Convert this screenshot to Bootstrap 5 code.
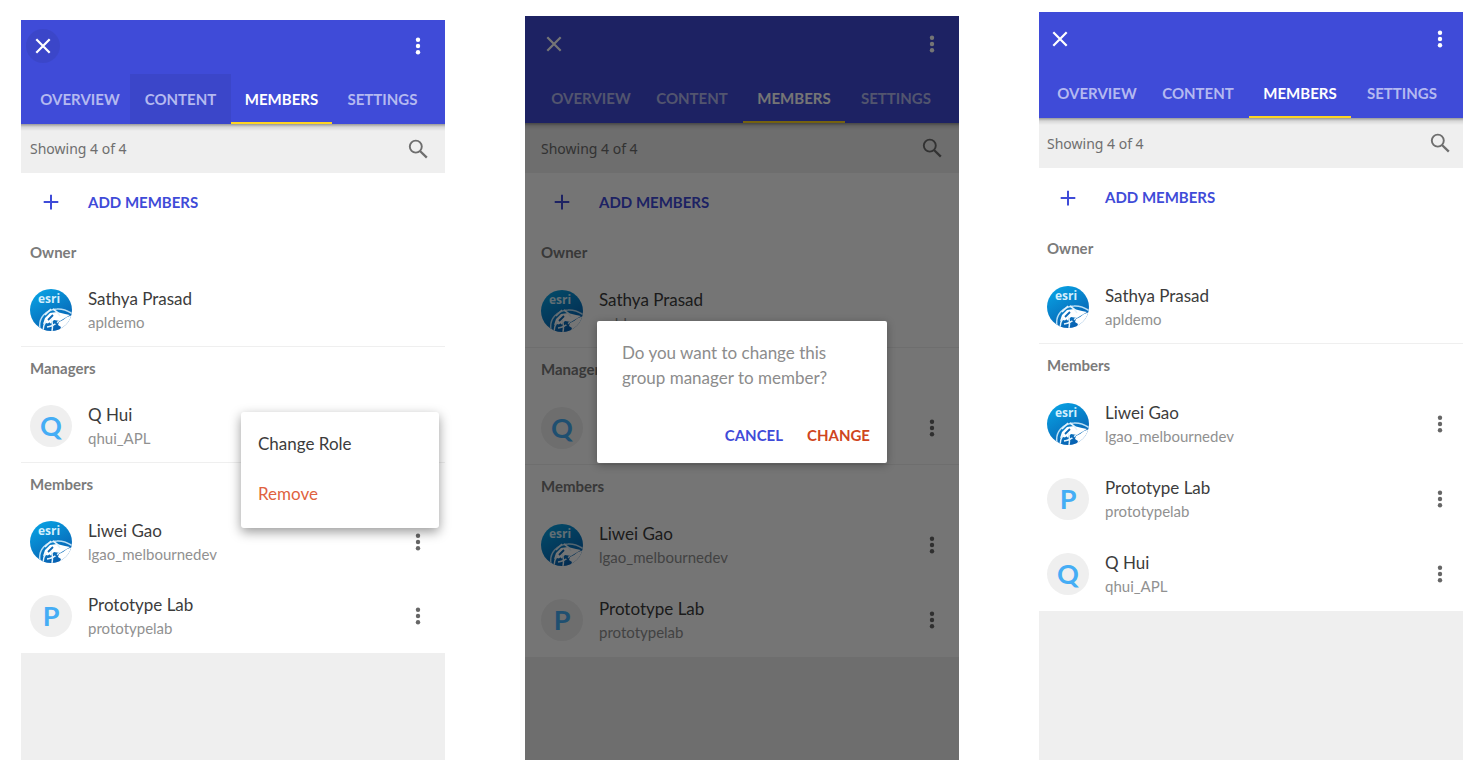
<!DOCTYPE html>
<html lang="en">
<head>
<meta charset="utf-8">
<meta name="viewport" content="width=device-width, initial-scale=1">
<title>Group members</title>
<link href="https://cdn.jsdelivr.net/npm/bootstrap@5.3.0/dist/css/bootstrap.min.css" rel="stylesheet">
<style>
  body { font-family: Lato, sans-serif; background: #fff; color: #3c3c3c; }
  .screens { display: grid; grid-template-columns: 424fr 434fr 424fr; column-gap: 80px; padding: 0 15px 16px 21px; }
  .screen { --gutter: 9px; --head: 104px; --sub: 49px; --add: 58px; --line: 74px; --end: 15px; --tab: 101px; background: #efefef; }
  .screen-menu { margin-top: 20px; }
  .screen-dialog { margin-top: 16px; --gutter: 16px; --head: 107px; --sub: 50px; --line: 75px; --tab: 102px; }
  .screen-result { margin-top: 12px; --gutter: 8px; --head: 106px; --sub: 50px; --add: 59px; --line: 75px; --end: 11px; --tab: 102px; }
  .screen button { border: 0; background: none; padding: 0; }
  .sprite { width: 0; height: 0; }
  .icon-btn { width: 34px; height: 34px; flex: none; display: grid; place-items: center; color: inherit; }
  .icon-btn svg, .plus svg { width: 24px; height: 24px; fill: currentColor; }
  .top-area { height: var(--head); background: #3f4bd8; color: #fff; }
  .app-bar { padding: 9px calc(var(--end) - 5px) 0 calc(var(--gutter) - 4px); }
  .screen-dialog .app-bar { padding-top: 11px; }
  .screen-result .app-bar { padding-top: 10px; }
  .screen .pressed { background: rgba(40,50,120,.15); }
  .tab-strip { padding-left: calc(var(--gutter) - 4px); }
  .tab-strip a { flex: 0 0 var(--tab); height: 50px; padding-top: 2px; display: grid; place-items: center; color: #b4b9f0; font-size: 15px; font-weight: 700; text-decoration: none; border-bottom: 2px solid transparent; }
  .tab-strip a:first-child { flex-basis: 104px; padding-left: 4px; }
  .tab-strip a.active { color: #fff; border-color: #fdd423; }
  .sub-bar { height: var(--sub); padding: 0 calc(var(--end) - 5px) 0 var(--gutter); color: #6e6e6e; font: 14px "Noto Sans", sans-serif; background: linear-gradient(rgba(0,0,0,.36), rgba(0,0,0,.1) 3px, transparent 7px); }
  .add-row { height: var(--add); width: 100%; padding-left: var(--gutter) !important; color: #3f4bd8; font-size: 15px; font-weight: 700; }
  .plus { width: 42px; margin-right: 16px; display: grid; place-items: center; }
  .group + .group { border-top: 1px solid #efefef; margin-top: -1px; }
  .group h2 { height: 42px; line-height: 42px; margin: 0; padding-left: var(--gutter); font-size: 15px; font-weight: 700; color: #7b7b7b; }
  .person { height: var(--line); padding: 0 calc(var(--end) - 5px) 0 var(--gutter); position: relative; }
  .avatar { width: 42px; height: 42px; margin-right: 16px; flex: none; border-radius: 50%; }
  .letter { background: #efefef; color: #45adf5; font-size: 27px; font-weight: 700; line-height: 42px; text-align: center; }
  .esri { display: grid; overflow: hidden; background: linear-gradient(150deg, #08a8e8, #0754a8); }
  .esri > * { grid-area: 1 / 1; }
  .esri svg { width: 42px; height: 42px; }
  .esri span { padding-left: 8px; font: 700 12px/20px "Open Sans", sans-serif; color: #d3effd; }
  .who { font-size: 17px; line-height: 24px; }
  .login { font-size: 15px; line-height: 22px; color: #919191; }
  .person .icon-btn { color: #666; }
  .role-menu { display: block; position: absolute; z-index: 2; right: 6px; top: 23px; width: 198px; padding: 7px 0 9px; border: 0; border-radius: 3px; box-shadow: 0 4px 12px rgba(0,0,0,.4); }
  .screen .role-menu button { height: 50px; padding: 0 17px; font-size: 17px; color: #3c3c3c; }
  .screen .role-menu button.warn { color: #df6240; }
  .shade { position: absolute; inset: 0; z-index: 3; background: rgba(0,0,0,.54); padding-top: 7px; }
  .confirm { width: 290px; padding: 19px 17px 13px 25px; background: #fff; border-radius: 2px; box-shadow: 0 2px 8px rgba(0,0,0,.3); }
  .confirm p { margin: 0 0 32px; font-size: 17px; line-height: 25px; color: #8c8c8c; }
  .confirm button { height: 28px; font-size: 15px; font-weight: 700; color: #3f4bd8; }
  .confirm button.warn { color: #cf4520; }
</style>
</head>
<body>
<svg class="sprite position-absolute" aria-hidden="true">
  <symbol id="close" viewBox="0 0 24 24"><path d="M5.3 5.3 18.7 18.7M18.7 5.3 5.3 18.7" stroke="currentColor" stroke-width="2.2"/></symbol>
  <symbol id="dots" viewBox="0 0 24 24"><circle cx="12" cy="5.7" r="2.2"/><circle cx="12" cy="12" r="2.2"/><circle cx="12" cy="18.3" r="2.2"/></symbol>
  <symbol id="search" viewBox="0 0 24 24"><circle cx="9.8" cy="9.6" r="6" fill="none" stroke="currentColor" stroke-width="1.9"/><path d="m14 14 6.8 6.6" stroke="currentColor" stroke-width="2.3"/></symbol>
  <symbol id="plus" viewBox="0 0 24 24"><path d="M12 4.8v14.6M4.7 12h14.6" stroke="currentColor" stroke-width="2"/></symbol>
  <symbol id="globe" viewBox="0 0 42 42">
    <path d="M43 26 37 28l-4 3-4 2-1 3 3 2-2 5h14z" fill="#fff"/>
    <path d="M10 40C8 29 16 20.500 27 20q7-.5 15 4.500" fill="none" stroke="#b9ddf4" stroke-width="1.500"/>
    <path d="m13 35 2-6 5-5 7-1 8 2 5 1-5 3-5 3-6-1-4 4-4-1z" fill="#fff"/>
    <path d="M13 42c0-5 1-7 3-10M21 30c2 4 2 7 1 12M17 38q7-1 12-6M23 20q5 3 7 7M15 26q4-4 6-6" fill="none" stroke="#e4f3fc" stroke-width="1.500"/>
    <path d="m18 31 5-5M18 36l2-2M24 38l3-2M25 33l2 2" stroke="#0b68b5" stroke-width="1.800"/>
  </symbol>
</svg>

<main class="screens min-vh-100">
  <section class="screen screen-menu">
    <header class="top-area d-flex flex-column justify-content-between">
      <div class="app-bar d-flex justify-content-between">
        <button class="icon-btn rounded-circle pressed" aria-label="Close"><svg><use href="#close"/></svg></button>
        <button class="icon-btn" aria-label="More"><svg><use href="#dots"/></svg></button>
      </div>
      <nav class="tab-strip d-flex"><a href="#">OVERVIEW</a><a href="#" class="pressed">CONTENT</a><a href="#" class="active">MEMBERS</a><a href="#">SETTINGS</a></nav>
    </header>
    <div class="sub-bar d-flex align-items-center justify-content-between"><span>Showing 4 of 4</span><button class="icon-btn" aria-label="Search"><svg><use href="#search"/></svg></button></div>
    <div class="bg-white">
      <button class="add-row d-flex align-items-center"><span class="plus"><svg><use href="#plus"/></svg></span>ADD MEMBERS</button>
      <div class="group"><h2>Owner</h2>
        <div class="person d-flex align-items-center"><div class="avatar esri"><svg><use href="#globe"/></svg><span>esri</span></div><div class="flex-grow-1"><div class="who">Sathya Prasad</div><div class="login">apldemo</div></div></div>
      </div>
      <div class="group"><h2>Managers</h2>
        <div class="person d-flex align-items-center"><div class="avatar letter">Q</div><div class="flex-grow-1"><div class="who">Q Hui</div><div class="login">qhui_APL</div></div>
          <div class="role-menu dropdown-menu"><button class="d-block w-100 text-start">Change Role</button><button class="d-block w-100 text-start warn">Remove</button></div>
        </div>
      </div>
      <div class="group"><h2>Members</h2>
        <div class="person d-flex align-items-center"><div class="avatar esri"><svg><use href="#globe"/></svg><span>esri</span></div><div class="flex-grow-1"><div class="who">Liwei Gao</div><div class="login">lgao_melbournedev</div></div><button class="icon-btn" aria-label="Options"><svg><use href="#dots"/></svg></button></div>
        <div class="person d-flex align-items-center"><div class="avatar letter">P</div><div class="flex-grow-1"><div class="who">Prototype Lab</div><div class="login">prototypelab</div></div><button class="icon-btn" aria-label="Options"><svg><use href="#dots"/></svg></button></div>
      </div>
    </div>
  </section>

  <section class="screen screen-dialog position-relative">
    <header class="top-area d-flex flex-column justify-content-between">
      <div class="app-bar d-flex justify-content-between">
        <button class="icon-btn" aria-label="Close"><svg><use href="#close"/></svg></button>
        <button class="icon-btn" aria-label="More"><svg><use href="#dots"/></svg></button>
      </div>
      <nav class="tab-strip d-flex"><a href="#">OVERVIEW</a><a href="#">CONTENT</a><a href="#" class="active">MEMBERS</a><a href="#">SETTINGS</a></nav>
    </header>
    <div class="sub-bar d-flex align-items-center justify-content-between"><span>Showing 4 of 4</span><button class="icon-btn" aria-label="Search"><svg><use href="#search"/></svg></button></div>
    <div class="bg-white">
      <button class="add-row d-flex align-items-center"><span class="plus"><svg><use href="#plus"/></svg></span>ADD MEMBERS</button>
      <div class="group"><h2>Owner</h2>
        <div class="person d-flex align-items-center"><div class="avatar esri"><svg><use href="#globe"/></svg><span>esri</span></div><div class="flex-grow-1"><div class="who">Sathya Prasad</div><div class="login">apldemo</div></div></div>
      </div>
      <div class="group"><h2>Managers</h2>
        <div class="person d-flex align-items-center"><div class="avatar letter">Q</div><div class="flex-grow-1"></div><button class="icon-btn" aria-label="Options"><svg><use href="#dots"/></svg></button></div>
      </div>
      <div class="group"><h2>Members</h2>
        <div class="person d-flex align-items-center"><div class="avatar esri"><svg><use href="#globe"/></svg><span>esri</span></div><div class="flex-grow-1"><div class="who">Liwei Gao</div><div class="login">lgao_melbournedev</div></div><button class="icon-btn" aria-label="Options"><svg><use href="#dots"/></svg></button></div>
        <div class="person d-flex align-items-center"><div class="avatar letter">P</div><div class="flex-grow-1"><div class="who">Prototype Lab</div><div class="login">prototypelab</div></div><button class="icon-btn" aria-label="Options"><svg><use href="#dots"/></svg></button></div>
      </div>
    </div>
    <div class="shade d-flex align-items-center justify-content-center">
      <div class="confirm" role="dialog" aria-label="Change role">
        <p>Do you want to change this<br>group manager to member?</p>
        <div class="d-flex justify-content-end gap-4"><button>CANCEL</button><button class="warn">CHANGE</button></div>
      </div>
    </div>
  </section>

  <section class="screen screen-result">
    <header class="top-area d-flex flex-column justify-content-between">
      <div class="app-bar d-flex justify-content-between">
        <button class="icon-btn" aria-label="Close"><svg><use href="#close"/></svg></button>
        <button class="icon-btn" aria-label="More"><svg><use href="#dots"/></svg></button>
      </div>
      <nav class="tab-strip d-flex"><a href="#">OVERVIEW</a><a href="#">CONTENT</a><a href="#" class="active">MEMBERS</a><a href="#">SETTINGS</a></nav>
    </header>
    <div class="sub-bar d-flex align-items-center justify-content-between"><span>Showing 4 of 4</span><button class="icon-btn" aria-label="Search"><svg><use href="#search"/></svg></button></div>
    <div class="bg-white">
      <button class="add-row d-flex align-items-center"><span class="plus"><svg><use href="#plus"/></svg></span>ADD MEMBERS</button>
      <div class="group"><h2>Owner</h2>
        <div class="person d-flex align-items-center"><div class="avatar esri"><svg><use href="#globe"/></svg><span>esri</span></div><div class="flex-grow-1"><div class="who">Sathya Prasad</div><div class="login">apldemo</div></div></div>
      </div>
      <div class="group"><h2>Members</h2>
        <div class="person d-flex align-items-center"><div class="avatar esri"><svg><use href="#globe"/></svg><span>esri</span></div><div class="flex-grow-1"><div class="who">Liwei Gao</div><div class="login">lgao_melbournedev</div></div><button class="icon-btn" aria-label="Options"><svg><use href="#dots"/></svg></button></div>
        <div class="person d-flex align-items-center"><div class="avatar letter">P</div><div class="flex-grow-1"><div class="who">Prototype Lab</div><div class="login">prototypelab</div></div><button class="icon-btn" aria-label="Options"><svg><use href="#dots"/></svg></button></div>
        <div class="person d-flex align-items-center"><div class="avatar letter">Q</div><div class="flex-grow-1"><div class="who">Q Hui</div><div class="login">qhui_APL</div></div><button class="icon-btn" aria-label="Options"><svg><use href="#dots"/></svg></button></div>
      </div>
    </div>
  </section>
</main>
<script src="https://cdn.jsdelivr.net/npm/bootstrap@5.3.0/dist/js/bootstrap.bundle.min.js"></script>
</body>
</html>
